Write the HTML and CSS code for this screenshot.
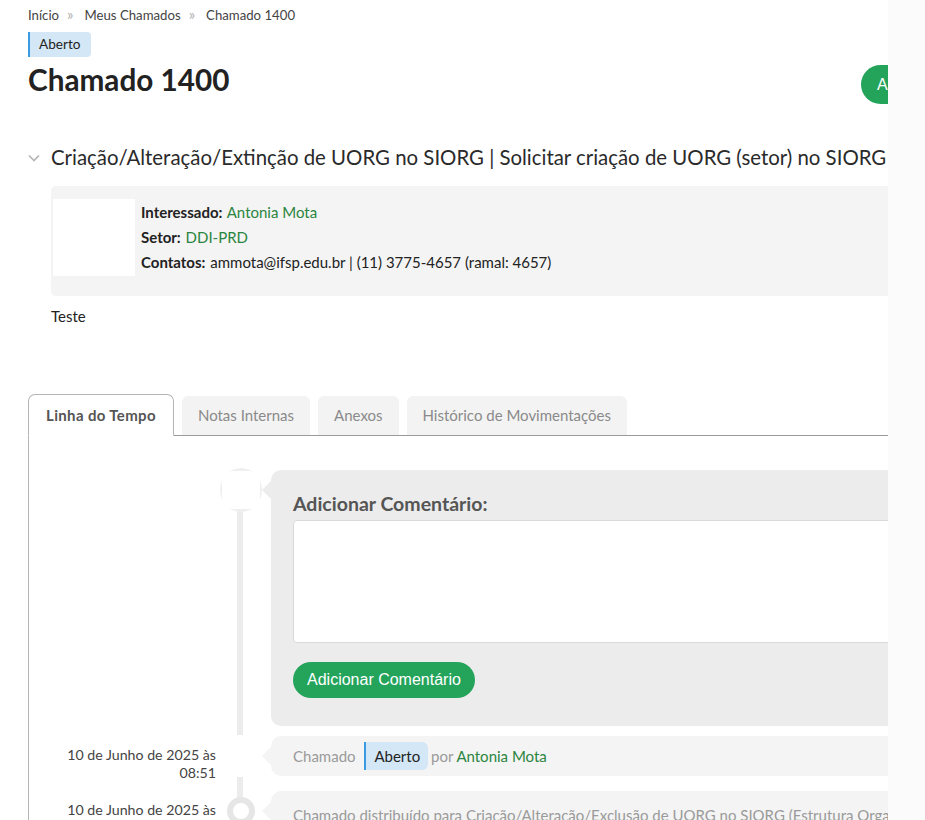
FILE: index.html
```html
<!DOCTYPE html>
<html lang="pt-br">
<head>
<meta charset="utf-8">
<title>Chamado 1400</title>
<link rel="stylesheet" href="styles.css">
</head>
<body>
<div class="page">
  <div class="content">
    <nav class="crumbs">
      <a href="#">Início</a><span class="sep">»</span><a href="#">Meus Chamados</a><span class="sep">»</span><span>Chamado 1400</span>
    </nav>
    <div class="status"><span class="badge">Aberto</span></div>
    <div class="header">
      <h1 class="title">Chamado 1400</h1>
      <button class="btn-green btn-top">Assumir</button>
    </div>
    <div class="subject">
      <svg class="chev" width="12" height="8" viewBox="0 0 12 8"><path d="M1 1.5 L6 6.5 L11 1.5" fill="none" stroke="#b5b5b5" stroke-width="1.6"/></svg>
      <h2 class="subject-text">Criação/Alteração/Extinção de UORG no SIORG | Solicitar criação de UORG (setor) no SIORG</h2>
    </div>
    <div class="info">
      <div class="photo"></div>
      <div class="info-lines">
        <div><b>Interessado:</b> <a href="#">Antonia Mota</a></div>
        <div><b>Setor:</b> <a href="#">DDI-PRD</a></div>
        <div><b>Contatos:</b> ammota@ifsp.edu.br | (11) 3775-4657 (ramal: 4657)</div>
      </div>
    </div>
    <p class="desc">Teste</p>

    <div class="tabs">
      <div class="tab active">Linha do Tempo</div>
      <div class="tab">Notas Internas</div>
      <div class="tab">Anexos</div>
      <div class="tab">Histórico de Movimentações</div>
    </div>
    <div class="tab-body">
      <div class="timeline">
        <div class="item">
          <div class="date"></div>
          <div class="node node-top"></div>
          <div class="panel panel-comment">
            <h3 class="comment-title">Adicionar Comentário:</h3>
            <div class="textarea"></div>
            <button class="btn-green btn-comment">Adicionar Comentário</button>
          </div>
        </div>
        <div class="item item-1">
          <div class="date">10 de Junho de 2025 às<br>08:51</div>
          <div class="node node-white"></div>
          <div class="panel panel-row">
            <span class="muted">Chamado</span> <span class="badge badge-sm">Aberto</span> <span class="muted">por</span> <a href="#">Antonia Mota</a>
          </div>
        </div>
        <div class="item item-2">
          <div class="date">10 de Junho de 2025 às<br>08:51</div>
          <div class="node-wrap"><div class="node node-ring"></div></div>
          <div class="panel panel-row2">
            <span class="muted">Chamado distribuído para Criação/Alteração/Exclusão de UORG no SIORG (Estrutura Organizacional) por Sistema</span>
          </div>
        </div>
      </div>
    </div>
  </div>
</div>
<div class="side"></div>
</body>
</html>
```

FILE: styles.css
```css
html, body {
  margin: 0;
  padding: 0;
  height: 820px;
  overflow: hidden;
}
body {
  display: flex;
  font-family: Lato, "Liberation Sans", sans-serif;
  font-size: 15px;
  color: #222;
  background: #fff;
}
a {
  color: #2b8540;
  text-decoration: none;
}
.page {
  flex: 1;
  min-width: 0;
  overflow: hidden;
  padding-left: 28px;
}
.side {
  width: 37px;
  flex: none;
  background: #fbfbfb;
}
.content {
  width: 1100px;
}

/* breadcrumb */
.crumbs {
  padding-top: 5px;
  font-size: 13.2px;
  line-height: 18px;
  height: 19px;
  color: #444;
}
.crumbs a {
  color: #444;
}
.crumbs .sep {
  color: #b0b0b0;
  font-size: 15px;
  margin: 0 11px 0 8px;
}

/* status badge */
.status {
  margin-top: 8px;
  line-height: 25px;
  height: 25px;
}
.badge {
  display: inline-block;
  vertical-align: top;
  background: #d4e7f6;
  border-left: 2px solid #3b9ae1;
  border-radius: 0 4px 4px 0;
  color: #222;
  font-size: 13.6px;
  line-height: 25px;
  padding: 0 11px 0 9px;
}

/* header */
.header {
  display: grid;
  grid-template-columns: 833px auto;
  align-items: start;
  justify-items: start;
  margin-top: 4px;
}
.title {
  margin: 0;
  font-size: 29.7px;
  font-weight: 700;
  line-height: 38px;
  color: #222;
}
.btn-green {
  font-family: "Liberation Sans", Arial, sans-serif;
  background: #24a45b;
  color: #fff;
  border: 0;
  font-size: 16px;
}
.btn-top {
  margin-top: 4px;
  height: 39px;
  padding: 0 16px;
  border-radius: 20px;
}

/* subject */
.subject {
  display: flex;
  align-items: center;
  margin-top: 39px;
}
.chev {
  margin-right: 11px;
  margin-top: 2px;
}
.subject-text {
  margin: 0;
  font-size: 20.4px;
  font-weight: 400;
  line-height: 28px;
  color: #2a2a2a;
  white-space: nowrap;
}

/* info box */
.info {
  display: flex;
  margin: 15px 0 0 23px;
  background: #f4f4f4;
  border-radius: 5px;
  padding: 13px 0 20px 2px;
}
.photo {
  width: 82px;
  height: 77px;
  background: #fff;
}
.info-lines {
  margin-left: 6px;
  padding-top: 1px;
  line-height: 25px;
  color: #222;
}
.info-lines b {
  font-weight: 700;
  margin-right: 1px;
}
.desc {
  margin: 10px 0 0 23px;
  line-height: 20px;
  color: #222;
}

/* tabs */
.tabs {
  display: flex;
  align-items: flex-end;
  margin-top: 69px;
  height: 40px;
  border-bottom: 1px solid #9a9a9a;
}
.tab {
  height: 39px;
  line-height: 39px;
  padding: 0 16px;
  background: #f3f3f3;
  color: #8a8a8a;
  border-radius: 6px 6px 0 0;
  margin-right: 8px;
}
.tab.active {
  height: 40px;
  line-height: 40px;
  padding: 0 17px;
  margin-bottom: -1px;
  background: #fff;
  color: #555;
  font-weight: 700;
  letter-spacing: 0.35px;
  border: 1px solid #b5b5b5;
  border-bottom: 1px solid #fff;
  border-radius: 7px 7px 0 0;
}
.tab-body {
  border-left: 1px solid #b5b5b5;
  padding-top: 34px;
}

/* timeline */
.timeline {
  position: relative;
}
.timeline::before {
  content: "";
  position: absolute;
  left: 208px;
  top: 0;
  bottom: 0;
  width: 6px;
  background: #ececec;
}
.item {
  position: relative;
  display: grid;
  grid-template-columns: 191px 42px 1fr;
  align-items: start;
}
.item-1 {
  margin-top: 10px;
}
.item-2 {
  margin-top: 9px;
}
.date {
  padding: 10px 4px 0 0;
  text-align: right;
  font-size: 14.2px;
  line-height: 18px;
  color: #444;
}
.node {
  position: relative;
}
.node-top {
  width: 42px;
  height: 44px;
  margin-top: -2px;
  border-radius: 50%;
  background: #efefef;
}
.node-top::after {
  content: "";
  position: absolute;
  left: 2px;
  top: 3px;
  width: 38px;
  height: 38px;
  border-radius: 11px;
  background: #fff;
}
.node-white {
  width: 36px;
  height: 42px;
  margin: -1px 0 0 6px;
  background: #fff;
  border-radius: 8px;
}
.node-wrap {
  display: flex;
  justify-content: center;
  padding-top: 6px;
}
.node-ring {
  width: 16px;
  height: 16px;
  border: 6px solid #e6e6e6;
  border-radius: 50%;
  background: #fff;
  margin-left: -1px;
}
.panel {
  position: relative;
  margin-left: 9px;
  border-radius: 10px;
}
.panel::before {
  content: "";
  position: absolute;
  left: -9px;
  top: 11px;
  border-top: 9px solid transparent;
  border-bottom: 9px solid transparent;
  border-right: 9px solid #f4f4f4;
}
.panel-comment {
  background: #ececec;
  padding: 22px 0 28px 22px;
}
.panel-comment::before {
  border-right-color: #ececec;
}
.comment-title {
  margin: 0;
  font-size: 19.5px;
  font-weight: 700;
  line-height: 24px;
  color: #555;
}
.textarea {
  margin-top: 4px;
  height: 121px;
  background: #fff;
  border: 1px solid #d9d9d9;
  border-radius: 4px;
}
.btn-comment {
  display: block;
  margin-top: 19px;
  height: 36px;
  padding: 0 14px;
  border-radius: 18px;
}
.panel-row {
  background: #f4f4f4;
  padding: 6px 22px;
  height: 28px;
  line-height: 28px;
  white-space: nowrap;
}
.panel-row2 {
  background: #f4f4f4;
  padding: 13px 22px;
  line-height: 22px;
  white-space: nowrap;
}
.muted {
  color: #9a9a9a;
}
.badge-sm {
  font-size: 15px;
  line-height: 28px;
  padding: 0 8px 0 8px;
  border-radius: 0 6px 6px 0;
  margin: 0 -1px 0 5px;
}
```
